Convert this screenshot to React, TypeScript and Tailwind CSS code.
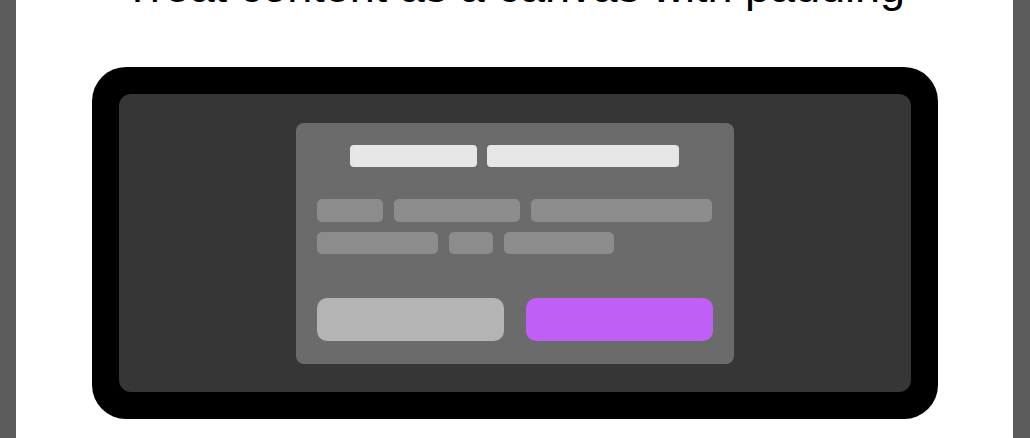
export default function App() {
  return (
    <div className="flex h-[438px] w-[1030px] overflow-hidden bg-white font-['Liberation_Sans',Arial,sans-serif]">
      {/* left edge */}
      <div className="w-4 shrink-0 bg-[#5c5c5c]" />

      <div className="flex flex-1 flex-col items-center overflow-hidden bg-white">
        {/* heading, mostly scrolled off the top */}
        <h1 className="-mt-[36px] whitespace-nowrap text-[45px] leading-[45px] text-black">
          Treat content as a canvas with padding
        </h1>

        {/* device frame */}
        <div className="mt-[58px] flex h-[352px] w-[846px] rounded-[34px] bg-black p-[27px]">
          <div className="flex flex-1 items-center justify-center rounded-[12px] bg-[#363636]">
            {/* modal card */}
            <div className="flex h-[241px] w-[438px] flex-col rounded-[8px] bg-[#6b6b6b] px-[21px] pt-[22px]">
              <div className="flex justify-center gap-[10px]">
                <div className="h-[22px] w-[127px] rounded-[4px] bg-[#e6e6e6]" />
                <div className="h-[22px] w-[192px] rounded-[4px] bg-[#e6e6e6]" />
              </div>

              <div className="mt-[32px] flex gap-[11px]">
                <div className="h-[23px] w-[66px] rounded-[5px] bg-[#8c8c8c]" />
                <div className="h-[23px] w-[126px] rounded-[5px] bg-[#8c8c8c]" />
                <div className="h-[23px] w-[181px] rounded-[5px] bg-[#8c8c8c]" />
              </div>
              <div className="mt-[10px] flex gap-[11px]">
                <div className="h-[22px] w-[121px] rounded-[5px] bg-[#8c8c8c]" />
                <div className="h-[22px] w-[44px] rounded-[5px] bg-[#8c8c8c]" />
                <div className="h-[22px] w-[110px] rounded-[5px] bg-[#8c8c8c]" />
              </div>

              <div className="mt-[44px] flex gap-[22px]">
                <div className="h-[43px] w-[187px] rounded-[10px] bg-[#b4b4b4]" />
                <div className="h-[43px] w-[187px] rounded-[10px] bg-[#c05ff5]" />
              </div>
            </div>
          </div>
        </div>
      </div>

      {/* right edge */}
      <div className="w-[17px] shrink-0 bg-[#5c5c5c]" />
    </div>
  );
}
